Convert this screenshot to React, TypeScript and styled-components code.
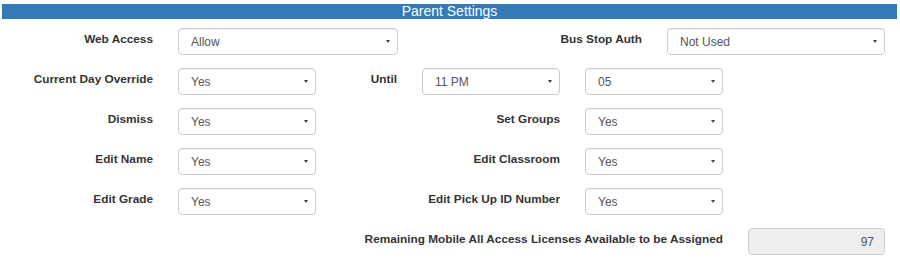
import { createGlobalStyle, styled } from "styled-components";

const GlobalStyle = createGlobalStyle`
  body {
    margin: 0;
    background: #ffffff;
    font-family: "Liberation Sans", Arial, sans-serif;
  }
`;

const Page = styled.div`
  width: 900px;
`;

const TituloBarra = styled.div`
  margin: 4px 3px 9px 2px;
  height: 15px;
  line-height: 15px;
  background-color: #337ab7;
  color: #ffffff;
  font-size: 14px;
  text-align: center;
`;

const Linha = styled.div<{ $cols: string }>`
  display: grid;
  grid-template-columns: ${(p) => p.$cols};
  column-gap: 25px;
  align-items: start;
  margin-bottom: 13px;
`;

const Rotulo = styled.label`
  padding-top: 3px;
  line-height: 17px;
  font-size: 11.8px;
  font-weight: bold;
  color: #333333;
  text-align: right;
  white-space: nowrap;
`;

const CaixaSelect = styled.div`
  position: relative;

  &::after {
    content: "";
    position: absolute;
    right: 8px;
    top: 12px;
    border-left: 2.5px solid transparent;
    border-right: 2.5px solid transparent;
    border-top: 3px solid #444444;
    pointer-events: none;
  }
`;

const Select = styled.select`
  appearance: none;
  -webkit-appearance: none;
  display: block;
  width: 100%;
  height: 27px;
  padding: 0 24px 0 12px;
  border: 1px solid #cccccc;
  border-radius: 4px;
  background-color: #ffffff;
  color: #555555;
  font-family: "Liberation Sans", Arial, sans-serif;
  font-size: 12px;
  box-shadow: inset 0 1px 1px rgba(0, 0, 0, 0.05);
`;

const CampoDesabilitado = styled.input`
  box-sizing: border-box;
  width: 100%;
  height: 27px;
  padding: 0 10px;
  border: 1px solid #cccccc;
  border-radius: 4px;
  background-color: #eeeeee;
  color: #555555;
  font-family: "Liberation Sans", Arial, sans-serif;
  font-size: 12px;
  text-align: right;
`;

const Vazio = styled.div``;

interface SelectProps {
  value: string;
  options: string[];
}

const Escolha = ({ value, options }: SelectProps) => (
  <CaixaSelect>
    <Select defaultValue={value}>
      {options.map((o) => (
        <option key={o}>{o}</option>
      ))}
    </Select>
  </CaixaSelect>
);

const simNao = ["Yes", "No"];
const tresColunas = "153px 138px 219px 138px";

export default function App() {
  return (
    <Page>
      <GlobalStyle />
      <TituloBarra>Parent Settings</TituloBarra>

      <Linha $cols="153px 220px 219px 218px">
        <Rotulo>Web Access</Rotulo>
        <Escolha value="Allow" options={["Allow", "Deny"]} />
        <Rotulo>Bus Stop Auth</Rotulo>
        <Escolha value="Not Used" options={["Not Used", "Required"]} />
      </Linha>

      <Linha $cols="153px 138px 56px 138px 138px">
        <Rotulo>Current Day Override</Rotulo>
        <Escolha value="Yes" options={simNao} />
        <Rotulo>Until</Rotulo>
        <Escolha value="11 PM" options={["10 PM", "11 PM"]} />
        <Escolha value="05" options={["00", "05", "10"]} />
      </Linha>

      <Linha $cols={tresColunas}>
        <Rotulo>Dismiss</Rotulo>
        <Escolha value="Yes" options={simNao} />
        <Rotulo>Set Groups</Rotulo>
        <Escolha value="Yes" options={simNao} />
      </Linha>

      <Linha $cols={tresColunas}>
        <Rotulo>Edit Name</Rotulo>
        <Escolha value="Yes" options={simNao} />
        <Rotulo>Edit Classroom</Rotulo>
        <Escolha value="Yes" options={simNao} />
      </Linha>

      <Linha $cols={tresColunas}>
        <Rotulo>Edit Grade</Rotulo>
        <Escolha value="Yes" options={simNao} />
        <Rotulo>Edit Pick Up ID Number</Rotulo>
        <Escolha value="Yes" options={simNao} />
      </Linha>

      <Linha $cols="153px 138px 382px 137px">
        <Vazio />
        <Vazio />
        <Rotulo>Remaining Mobile All Access Licenses Available to be Assigned</Rotulo>
        <CampoDesabilitado disabled value="97" readOnly />
      </Linha>
    </Page>
  );
}
